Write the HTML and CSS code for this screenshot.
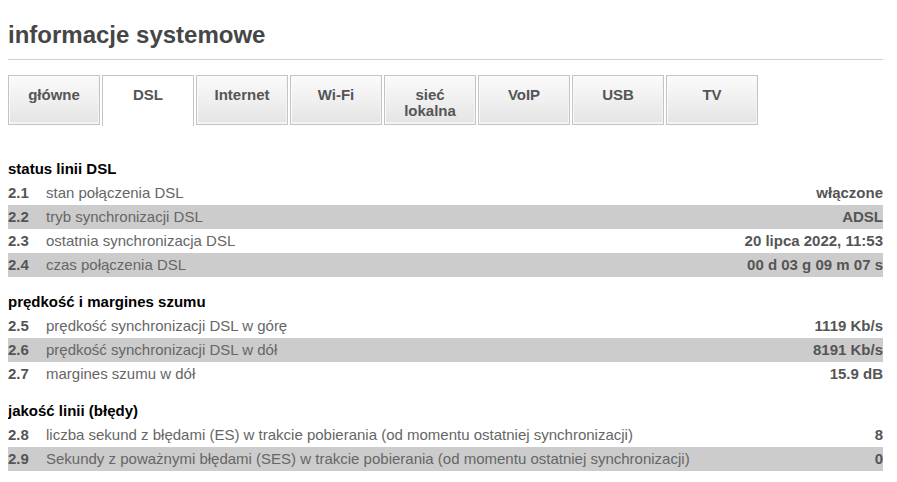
FILE: index.html
```html
<!DOCTYPE html>
<html lang="pl">
<head>
<meta charset="utf-8">
<title>informacje systemowe</title>
<link rel="stylesheet" href="styles.css">
</head>
<body>
<div class="page">
  <h1 class="title">informacje systemowe</h1>
  <hr class="rule">
  <nav class="tabs">
    <div class="tab">główne</div>
    <div class="tab active">DSL</div>
    <div class="tab">Internet</div>
    <div class="tab">Wi-Fi</div>
    <div class="tab">sieć<br>lokalna</div>
    <div class="tab">VoIP</div>
    <div class="tab">USB</div>
    <div class="tab">TV</div>
  </nav>

  <section class="sect first">
    <h2 class="sect-title">status linii DSL</h2>
    <div class="row"><span class="num">2.1</span><span class="label">stan połączenia DSL</span><span class="val">włączone</span></div>
    <div class="row alt"><span class="num">2.2</span><span class="label">tryb synchronizacji DSL</span><span class="val">ADSL</span></div>
    <div class="row"><span class="num">2.3</span><span class="label">ostatnia synchronizacja DSL</span><span class="val">20 lipca 2022, 11:53</span></div>
    <div class="row alt"><span class="num">2.4</span><span class="label">czas połączenia DSL</span><span class="val">00 d 03 g 09 m 07 s</span></div>
  </section>

  <section class="sect">
    <h2 class="sect-title">prędkość i margines szumu</h2>
    <div class="row"><span class="num">2.5</span><span class="label">prędkość synchronizacji DSL w górę</span><span class="val">1119 Kb/s</span></div>
    <div class="row alt"><span class="num">2.6</span><span class="label">prędkość synchronizacji DSL w dół</span><span class="val">8191 Kb/s</span></div>
    <div class="row"><span class="num">2.7</span><span class="label">margines szumu w dół</span><span class="val">15.9 dB</span></div>
  </section>

  <section class="sect">
    <h2 class="sect-title">jakość linii (błędy)</h2>
    <div class="row"><span class="num">2.8</span><span class="label">liczba sekund z błędami (ES) w trakcie pobierania (od momentu ostatniej synchronizacji)</span><span class="val">8</span></div>
    <div class="row alt"><span class="num">2.9</span><span class="label">Sekundy z poważnymi błędami (SES) w trakcie pobierania (od momentu ostatniej synchronizacji)</span><span class="val">0</span></div>
  </section>
</div>
</body>
</html>
```

FILE: styles.css
```css
* { box-sizing: border-box; }

body {
  margin: 8px;
  background: #fff;
  font-family: "Liberation Sans", Arial, sans-serif;
  font-size: 15px;
  color: #666;
}

.page {
  width: 875px;
}

.title {
  margin: 13px 0 11px 0;
  font-size: 24px;
  line-height: 27px;
  font-weight: bold;
  color: #464646;
}

.rule {
  margin: 0;
  border: 0;
  height: 1px;
  background: #d0d0d0;
}

.tabs {
  display: flex;
  gap: 2px;
  margin-top: 15px;
}

.tab {
  width: 92px;
  height: 50px;
  border: 1px solid #c4c4c4;
  box-shadow: inset 1px 1px 0 #fafafa, inset -1px -2px 0 #f4f4f4;
  background: linear-gradient(#fbfbfb, #e4e4e4);
  padding-top: 11px;
  text-align: center;
  font-weight: bold;
  font-size: 15px;
  line-height: 16px;
  color: #555;
}

.tab.active {
  background: #fff;
  box-shadow: none;
  border-bottom: 0;
  height: 51px;
}

.sect {
  margin-top: 13px;
}

.sect.first {
  margin-top: 31px;
}

.sect-title {
  margin: 0;
  font-size: 15px;
  line-height: 24px;
  font-weight: bold;
  color: #000;
}

.row {
  display: grid;
  grid-template-columns: 38px 1fr auto;
  height: 24px;
  line-height: 24px;
}

.row.alt {
  background: #cccccc;
}

.num {
  font-weight: bold;
  color: #555;
}

.label {
  color: #666;
}

.val {
  font-weight: bold;
  color: #555;
  text-align: right;
}
```
